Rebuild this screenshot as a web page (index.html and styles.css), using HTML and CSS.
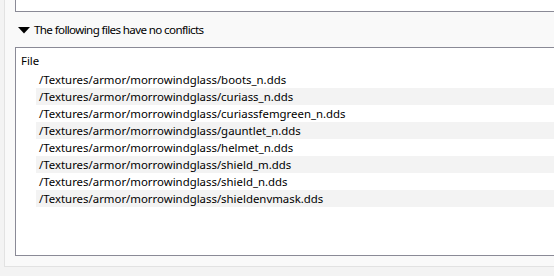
FILE: index.html
```html
<!DOCTYPE html>
<html>
<head>
<meta charset="utf-8">
<link rel="stylesheet" href="styles.css">
</head>
<body>
<div class="panel">
  <div class="topbox"></div>
  <div class="group">
    <svg class="arrow" width="12" height="7" viewBox="0 0 12 7"><polygon points="0,0 12,0 6,6.5" fill="#000"/></svg>
    <span class="group-title">The following files have no conflicts</span>
  </div>
  <div class="listbox">
    <div class="colhead">File</div>
    <div class="rows">
      <div class="row">/Textures/armor/morrowindglass/boots_n.dds</div>
      <div class="row alt">/Textures/armor/morrowindglass/curiass_n.dds</div>
      <div class="row">/Textures/armor/morrowindglass/curiassfemgreen_n.dds</div>
      <div class="row alt">/Textures/armor/morrowindglass/gauntlet_n.dds</div>
      <div class="row">/Textures/armor/morrowindglass/helmet_n.dds</div>
      <div class="row alt">/Textures/armor/morrowindglass/shield_m.dds</div>
      <div class="row">/Textures/armor/morrowindglass/shield_n.dds</div>
      <div class="row alt">/Textures/armor/morrowindglass/shieldenvmask.dds</div>
    </div>
  </div>
</div>
</body>
</html>
```
FILE: styles.css
```css
html, body {
  margin: 0;
  padding: 0;
}
body {
  width: 554px;
  height: 276px;
  overflow: hidden;
  background: #f3f3f3;
  font-family: "Noto Sans", "Liberation Sans", sans-serif;
  font-size: 11.4px;
  color: #000;
}
.panel {
  margin-left: 4px;
  width: 550px;
  height: 267px;
  box-sizing: border-box;
  border-left: 1px solid #e2e2e2;
  border-bottom: 1px solid #e2e2e2;
  background: #f9f9f9;
  padding-left: 10px;
}
.topbox {
  height: 11px;
  background: #fff;
  border-left: 1px solid #8a8a96;
  border-bottom: 1px solid #8a8a96;
}
.group {
  height: 35px;
  display: flex;
  align-items: center;
  padding-left: 3px;
}
.arrow {
  display: block;
  margin-right: 4px;
  margin-top: 1px;
}
.group-title {
  line-height: 17px;
  font-size: 11.6px;
  letter-spacing: -0.63px;
}
.listbox {
  height: 209px;
  box-sizing: border-box;
  background: #fff;
  border: 1px solid #8a8a96;
  border-right: none;
}
.colhead {
  padding: 4px 0 0 5px;
  height: 17px;
  line-height: 17px;
  margin-bottom: 2px;
}
.rows {
  padding-left: 20px;
}
.row {
  height: 17px;
  line-height: 17px;
  padding-left: 3px;
  white-space: nowrap;
}
.row.alt {
  background: #f3f3f3;
}
```
